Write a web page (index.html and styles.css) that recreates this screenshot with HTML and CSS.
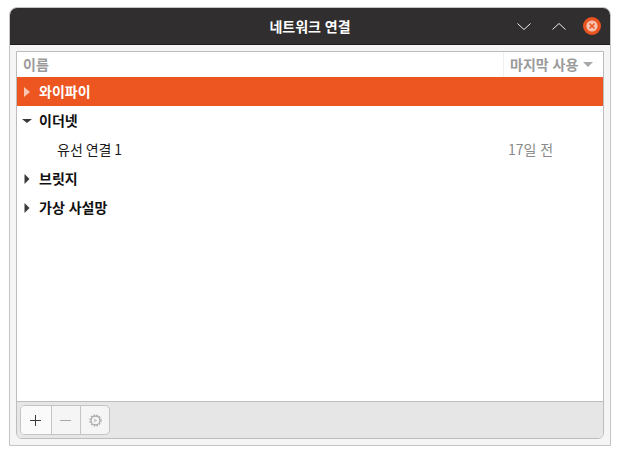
FILE: index.html
```html
<!DOCTYPE html>
<html lang="ko">
<head>
<meta charset="utf-8">
<title>네트워크 연결</title>
<link rel="stylesheet" href="styles.css">
</head>
<body>
<div class="window">
  <header class="titlebar">
    <div class="title">네트워크 연결</div>
    <div class="controls">
      <svg class="ctl" width="14" height="7" viewBox="0 0 14 7"><path d="M.5.5 7 6.5 13.5.5" fill="none" stroke="#eee" stroke-width="1"/></svg>
      <svg class="ctl" width="14" height="7" viewBox="0 0 14 7"><path d="M.5 6.5 7 .5l6.5 6" fill="none" stroke="#eee" stroke-width="1"/></svg>
      <svg class="ctl" width="18" height="18" viewBox="0 0 18 18"><circle cx="9" cy="9" r="9" fill="#e95420"/><circle cx="9" cy="9" r="5.6" fill="#f6c3b0"/><path d="M6.5 6.5l5 5M11.5 6.5l-5 5" stroke="#e95420" stroke-width="1.5"/></svg>
    </div>
  </header>
  <div class="body">
    <div class="frame">
      <div class="head">
        <div class="col-name">이름</div>
        <div class="col-last">마지막 사용<svg class="sort" width="10" height="5" viewBox="0 0 10 5"><path d="M0 0h10L5 5z" fill="#a8a8a8"/></svg></div>
      </div>
      <div class="list">
        <div class="row group selected"><svg class="arrow" width="10" height="12" viewBox="0 0 10 12"><path d="M2 1l6 5-6 5z" fill="#f8c6b2"/></svg><span>와이파이</span></div>
        <div class="row group"><svg class="arrow" width="10" height="12" viewBox="0 0 10 12"><path d="M0 4h10L5 8z" fill="#3a3a3a"/></svg><span>이더넷</span></div>
        <div class="row child"><span class="conn">유선 연결 1</span><span class="when">17일 전</span></div>
        <div class="row group"><svg class="arrow" width="10" height="12" viewBox="0 0 10 12"><path d="M2.5 1l5 5-5 5z" fill="#3a3a3a"/></svg><span>브릿지</span></div>
        <div class="row group"><svg class="arrow" width="10" height="12" viewBox="0 0 10 12"><path d="M2.5 1l5 5-5 5z" fill="#3a3a3a"/></svg><span>가상 사설망</span></div>
      </div>
      <div class="toolbar">
        <div class="btns">
          <div class="btn"><svg width="11" height="11" viewBox="0 0 11 11"><path d="M5.5 0v11M0 5.5h11" stroke="#3a3a3a" stroke-width="1"/></svg></div>
          <div class="btn"><svg width="11" height="11" viewBox="0 0 11 11"><path d="M0 5.5h11" stroke="#a8a8a8" stroke-width="1"/></svg></div>
          <div class="btn"><svg width="13" height="13" viewBox="0 0 13 13"><circle cx="6.5" cy="6.5" r="4.4" fill="none" stroke="#a8a8a8" stroke-width="1.1"/><circle cx="6.5" cy="6.5" r="5.5" fill="none" stroke="#a8a8a8" stroke-width="1.3" stroke-dasharray="1.6 1.3"/><path d="M5.2 4.5l3 2-3 2z" fill="#c4c4c4"/></svg></div>
        </div>
      </div>
    </div>
  </div>
</div>
</body>
</html>
```
FILE: styles.css
```css
* { box-sizing: border-box; }
html, body { margin: 0; padding: 0; background: #fff; }
body { padding: 7px 9px 0; font-family: "Noto Sans CJK KR", "Liberation Sans", sans-serif; font-size: 14px; }
.window {
  width: 602px; height: 439px;
  border: 1px solid #c4c4c4;
  border-radius: 8px 8px 0 0;
  background: #f5f5f5;
  display: flex; flex-direction: column;
}
.titlebar {
  height: 37px; flex: none;
  background: #302e2e;
  border-bottom: 1px solid #1c1c1c;
  border-radius: 7px 7px 0 0;
  display: flex; align-items: center; justify-content: center;
  position: relative;
}
.title { color: #fff; font-weight: bold; font-size: 14px; line-height: 20px; }
.controls { position: absolute; right: 9px; top: 9px; display: flex; align-items: center; }
.ctl { display: block; }
.ctl:nth-child(2) { margin: 0 17px 0 21px; }
.body { flex: 1; padding: 6px; min-height: 0; display: flex; }
.frame {
  flex: 1; border: 1px solid #bdbdbd; border-radius: 0 0 6px 6px;
  background: #fff; display: flex; flex-direction: column; overflow: hidden;
}
.head { height: 25px; flex: none; display: flex; background: #fff; color: #9a9a9a; font-weight: bold; font-size: 14px; line-height: 25px; }
.col-name { flex: 1; padding-left: 6px; }
.col-last { width: 100px; padding-left: 6px; border-left: 1px solid #f0f0f0; display: flex; align-items: center; gap: 5px; }
.list { flex: 1; min-height: 0; }
.row { height: 29px; display: flex; align-items: center; font-size: 14px; line-height: 20px; color: #1a1a1a; }
.row span { margin-bottom: 2px; }
.group { padding-left: 5px; font-weight: bold; color: #111; }
.arrow { display: block; margin-right: 7px; flex: none; }
.selected { background: #ed5621; color: #fff; }
.child { padding-left: 40px; }
.conn { flex: 1; word-spacing: -1px; }
.when { width: 95px; color: #8a8a8a; }
.toolbar { height: 37px; flex: none; background: #e6e6e6; border-top: 1px solid #bdbdbd; padding: 3px; }
.btns { display: inline-flex; height: 30px; border: 1px solid #c4c4c4; border-radius: 5px; background: #f5f5f5; }
.btn { width: 29px; padding-right: 2px; display: flex; align-items: center; justify-content: center; border-left: 1px solid #c4c4c4; }
.btn:first-child { width: 30px; border-left: 0; background: #fafafa; border-radius: 4px 0 0 4px; }
.btn:last-child { padding-right: 0; }
```
